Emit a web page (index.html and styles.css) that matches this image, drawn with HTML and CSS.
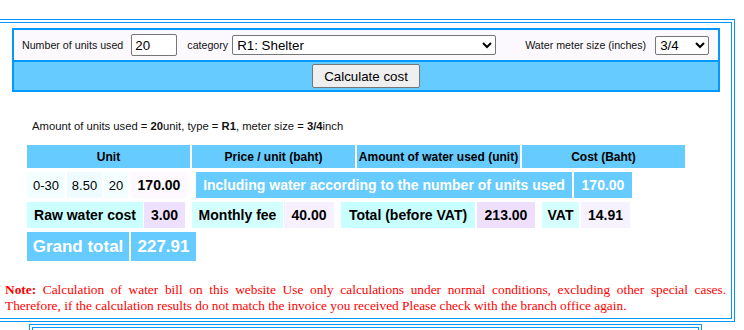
FILE: index.html
```html
<!DOCTYPE html>
<html>
<head>
<meta charset="utf-8">
<link rel="stylesheet" href="styles.css">
</head>
<body>
<div class="outer">
  <div class="inner">
    <div class="formbox">
      <div class="form-row">
        <span class="lbl lbl-units">Number of units used</span>
        <input class="txt" type="text" value="20">
        <span class="lbl lbl-cat">category</span>
        <select class="sel sel-cat"><option>R1: Shelter</option></select>
        <span class="lbl lbl-meter">Water meter size (inches)</span>
        <select class="sel sel-meter"><option>3/4</option></select>
      </div>
      <div class="btn-row">
        <button class="btn">Calculate cost</button>
      </div>
    </div>

    <div class="summary">Amount of units used = <b>20</b>unit, type = <b>R1</b>, meter size = <b>3/4</b>inch</div>

    <div class="result">
      <div class="row head">
        <div class="hc">Unit</div>
        <div class="hc">Price / unit (baht)</div>
        <div class="hc">Amount of water used (unit)</div>
        <div class="hc">Cost (Baht)</div>
      </div>
      <div class="row r2">
        <div class="c c-range">0-30</div>
        <div class="c c-price">8.50</div>
        <div class="c c-used">20</div>
        <div class="c c-cost b">170.00</div>
        <div class="c c-incl w">Including water according to the number of units used</div>
        <div class="c c-incl-v w">170.00</div>
      </div>
      <div class="row r3">
        <div class="c c-raw b">Raw water cost</div>
        <div class="c c-raw-v b">3.00</div>
        <div class="c c-fee b">Monthly fee</div>
        <div class="c c-fee-v b">40.00</div>
        <div class="c c-tot b">Total (before VAT)</div>
        <div class="c c-tot-v b">213.00</div>
        <div class="c c-vat b">VAT</div>
        <div class="c c-vat-v b">14.91</div>
      </div>
      <div class="row r4">
        <div class="c c-grand">Grand total</div>
        <div class="c c-grand-v">227.91</div>
      </div>
    </div>

    <p class="note"><span class="note-lbl">Note:</span> Calculation of water bill on this website Use only calculations under normal conditions, excluding other special cases. Therefore, if the calculation results do not match the invoice you received Please check with the branch office again.</p>
  </div>
</div>
<div class="outer2">
  <div class="inner2"></div>
</div>
</body>
</html>
```

FILE: styles.css
```css
html, body {
  margin: 0;
  padding: 0;
  background: #fff;
  overflow: hidden;
}

body {
  font-family: "Liberation Sans", Arial, sans-serif;
  color: #000;
}

.outer {
  box-sizing: border-box;
  width: 745px;
  margin: 19px 0 0 -10px;
  border: 1px solid #0099ff;
  padding: 2px;
}

.inner {
  border: 1px solid #0099ff;
  padding: 5px 5px 4px 11px;
}

.formbox {
  box-sizing: border-box;
  width: 708px;
  margin-left: 7px;
  border: 2px solid #0099ff;
}

.form-row {
  display: flex;
  align-items: center;
  height: 30px;
  background: #fcf9fe;
  border-bottom: 2px solid #0099ff;
  padding-left: 8px;
}

.lbl {
  font-size: 10.67px;
  color: #111;
  white-space: nowrap;
}

.lbl-units { margin-right: 8px; }
.lbl-cat { margin-left: 10px; margin-right: 4px; }
.lbl-meter { margin-left: 29px; margin-right: 9px; }

.txt {
  box-sizing: border-box;
  width: 46px;
  height: 22px;
  margin: 0;
  padding: 1px 3px;
  border: 1px solid #767676;
  border-radius: 2px;
  font-family: "Liberation Sans", Arial, sans-serif;
  font-size: 13.33px;
  background: #fff;
}

.sel {
  box-sizing: border-box;
  margin: 0;
  border: 1px solid #767676;
  border-radius: 2px;
  background: #fff;
  font-family: "Liberation Sans", Arial, sans-serif;
  font-size: 13.33px;
  color: #000;
}

.sel-cat { width: 264px; height: 20px; }
.sel-meter { width: 54px; height: 19px; }

.btn-row {
  display: flex;
  justify-content: center;
  align-items: center;
  height: 28px;
  background: #66ccff;
}

.btn {
  box-sizing: border-box;
  width: 108px;
  height: 24px;
  margin: 0;
  padding: 0;
  border: 1px solid #767676;
  border-radius: 2px;
  background: #efefef;
  font-family: "Liberation Sans", Arial, sans-serif;
  font-size: 13.33px;
  color: #000;
}

.summary {
  margin: 27px 0 0 27px;
  font-size: 11.25px;
  line-height: 14px;
  color: #111;
}

.result {
  margin: 12px 0 0 22px;
}

.row {
  display: flex;
}

.head { gap: 2px; }

.hc {
  width: 163px;
  height: 23px;
  background: #66ccff;
  font-size: 12px;
  font-weight: bold;
  display: flex;
  align-items: center;
  justify-content: center;
}

.c {
  display: flex;
  align-items: center;
  justify-content: center;
  font-size: 13px;
  white-space: nowrap;
}

.b { font-weight: bold; font-size: 14px; }
.w { font-weight: bold; font-size: 14px; color: #fff; background: #66ccff; }

.r2 { margin-top: 4px; height: 26px; }
.c-range { width: 38px; background: #f3ffff; }
.c-price { width: 35px; margin-left: 2px; background: #eefcff; }
.c-used { width: 24px; margin-left: 2px; background: #f3ffff; }
.c-cost { width: 56px; margin-left: 3px; background: #fdf9ff; }
.c-incl { width: 376px; margin-left: 9px; }
.c-incl-v { width: 58px; margin-left: 2px; }

.r3 { margin-top: 4px; height: 26px; }
.c-raw { width: 116px; background: #ccffff; }
.c-raw-v { width: 41px; margin-left: 1px; background: #eee0ff; }
.c-fee { width: 91px; margin-left: 7px; background: #d4ffff; }
.c-fee-v { width: 50px; margin-left: 1px; background: #f7f0ff; }
.c-tot { width: 134px; margin-left: 7px; background: #c8ffff; }
.c-tot-v { width: 58px; margin-left: 2px; background: #eee0fd; }
.c-vat { width: 37px; margin-left: 7px; background: #d5ffff; }
.c-vat-v { width: 49px; margin-left: 2px; background: #f7f2ff; }

.r4 { margin-top: 4px; height: 29px; }
.c-grand, .c-grand-v {
  background: #66ccff;
  color: #fff;
  font-weight: bold;
  font-size: 17px;
}
.c-grand { width: 102px; }
.c-grand-v { width: 65px; margin-left: 2px; }

.note {
  margin: 21px 0 0 0;
  font-family: "Liberation Serif", "Times New Roman", serif;
  font-size: 13.33px;
  line-height: 16px;
  color: #ff0000;
  text-align: justify;
}

.note-lbl { font-weight: bold; }

.outer2 {
  box-sizing: border-box;
  width: 673px;
  height: 40px;
  margin: 2px 0 0 29px;
  border: 1px solid #0099ff;
  padding: 2px;
}

.inner2 {
  height: 100%;
  box-sizing: border-box;
  border: 1px solid #0099ff;
}
```
